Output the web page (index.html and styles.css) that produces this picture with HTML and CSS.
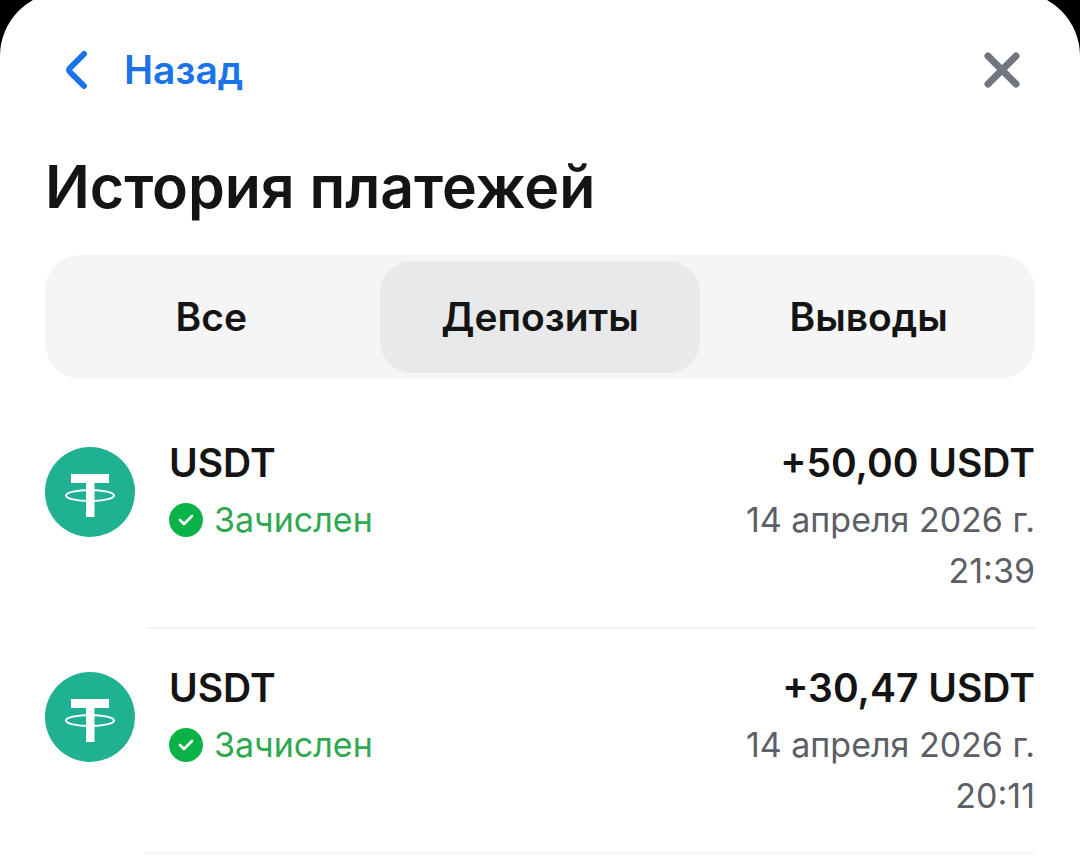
FILE: index.html
```html
<!DOCTYPE html>
<html lang="ru">

<head>
    <meta charset="UTF-8">
    <meta name="viewport" content="width=device-width, initial-scale=1.0">
    <title>История платежей</title>
    <link rel="stylesheet" href="styles.css">
</head>

<body>
    <svg class="sprite" aria-hidden="true">
        <symbol id="usdt" viewBox="0 0 90 90">
            <circle cx="45" cy="45" r="45" fill="#20b092" />
            <path d="M26 27h38v9H49.5v34h-8.5V36H26z" fill="#fff" />
            <ellipse cx="45" cy="48.500" rx="24" ry="5.500" fill="none" stroke="#fff" stroke-width="2" />
        </symbol>
        <symbol id="done" viewBox="0 0 34 34">
            <circle cx="17" cy="17" r="17" fill="#0bb247" />
            <path d="M11 17l4 4 8-8" fill="none" stroke="#fff" stroke-width="2.6" stroke-linecap="round" stroke-linejoin="round" />
        </symbol>
    </svg>
    <main class="sheet">
        <header class="topbar">
            <button type="button" class="back">
                <svg width="24" height="40" viewBox="0 0 24 40"><path d="M19 4L5 18q-2 2 0 4l14 14" /></svg>
                Назад
            </button>
            <button type="button" class="close" aria-label="Закрыть">
                <svg width="36" height="36" viewBox="0 0 36 36"><path d="M4 4l28 28M32 4L4 32" /></svg>
            </button>
        </header>
        <h1>История платежей</h1>
        <nav class="tabs">
            <button type="button">Все</button>
            <button type="button" class="active">Депозиты</button>
            <button type="button">Выводы</button>
        </nav>
        <ul class="payments">
            <li class="payment">
                <svg class="coin"><use href="#usdt" /></svg>
                <div class="row">
                    <div class="info">
                        <div class="name">USDT</div>
                        <div class="status"><svg><use href="#done" /></svg>Зачислен</div>
                    </div>
                    <div class="sum">
                        <div class="name">+50,00 USDT</div>
                        <div class="date">14 апреля 2026 г.<br>21:39</div>
                    </div>
                </div>
            </li>
            <li class="payment">
                <svg class="coin"><use href="#usdt" /></svg>
                <div class="row">
                    <div class="info">
                        <div class="name">USDT</div>
                        <div class="status"><svg><use href="#done" /></svg>Зачислен</div>
                    </div>
                    <div class="sum">
                        <div class="name">+30,47 USDT</div>
                        <div class="date">14 апреля 2026 г.<br>20:11</div>
                    </div>
                </div>
            </li>
        </ul>
    </main>
</body>

</html>
```
FILE: styles.css
```css
* {
    box-sizing: border-box;
}

body {
    margin: 0;
    background-color: #000;
    color: #141414;
    font-family: Inter, sans-serif;
}

button {
    padding: 0;
    border: none;
    background: none;
    color: inherit;
    font: inherit;
    cursor: pointer;
}

.sprite {
    display: none;
}

/* the sheet slides slightly past the top edge */
.sheet {
    min-height: calc(100vh + 8px);
    margin-top: -8px;
    padding: 48px 45px 0;
    background-color: #fff;
    border-radius: 64px 64px 0 0;
}

.topbar {
    display: flex;
    justify-content: space-between;
    align-items: center;
    height: 60px;
    padding: 0 15px 0 20px;
}

.back {
    display: flex;
    align-items: center;
    gap: 35px;
    color: #1a73e8;
    font-size: 39px;
    line-height: 46px;
    font-weight: 600;
}

.back svg,
.close svg {
    display: block;
    fill: none;
    stroke: currentColor;
    stroke-width: 6;
    stroke-linecap: round;
    stroke-linejoin: round;
}

.close {
    color: #717680;
}

.close svg {
    stroke-width: 7;
}

h1 {
    margin: 51px 0 32px;
    font-size: 59px;
    line-height: 72px;
    font-weight: 600;
}

.tabs {
    display: grid;
    grid-template-columns: repeat(3, 1fr);
    gap: 8px;
    padding: 6px;
    border-radius: 36px;
    background-color: #f5f5f5;
}

.tabs button {
    height: 112px;
    border-radius: 32px;
    font-size: 39px;
    line-height: 46px;
    font-weight: 600;
}

.tabs .active {
    background-color: #e8e9eb;
}

.payments {
    margin: 25px 0 0;
    padding: 0;
    list-style: none;
}

.payment {
    display: flex;
    gap: 11px;
}

.coin {
    flex: none;
    width: 90px;
    height: 90px;
    margin-top: 43px;
}

.row {
    flex: 1;
    display: flex;
    justify-content: space-between;
    height: 225px;
    padding: 34px 0 0 23px;
    border-bottom: 2px solid #f3f3f4;
}

.name {
    font-size: 39px;
    line-height: 50px;
    font-weight: 600;
}

.status {
    display: flex;
    align-items: center;
    gap: 11px;
    margin-top: 6px;
    color: #2fa84f;
    font-size: 34px;
    line-height: 51px;
}

.status svg {
    width: 34px;
    height: 34px;
}

.sum {
    text-align: right;
}

.date {
    margin-top: 6px;
    color: #5c5f66;
    font-size: 34px;
    line-height: 51px;
}
```
